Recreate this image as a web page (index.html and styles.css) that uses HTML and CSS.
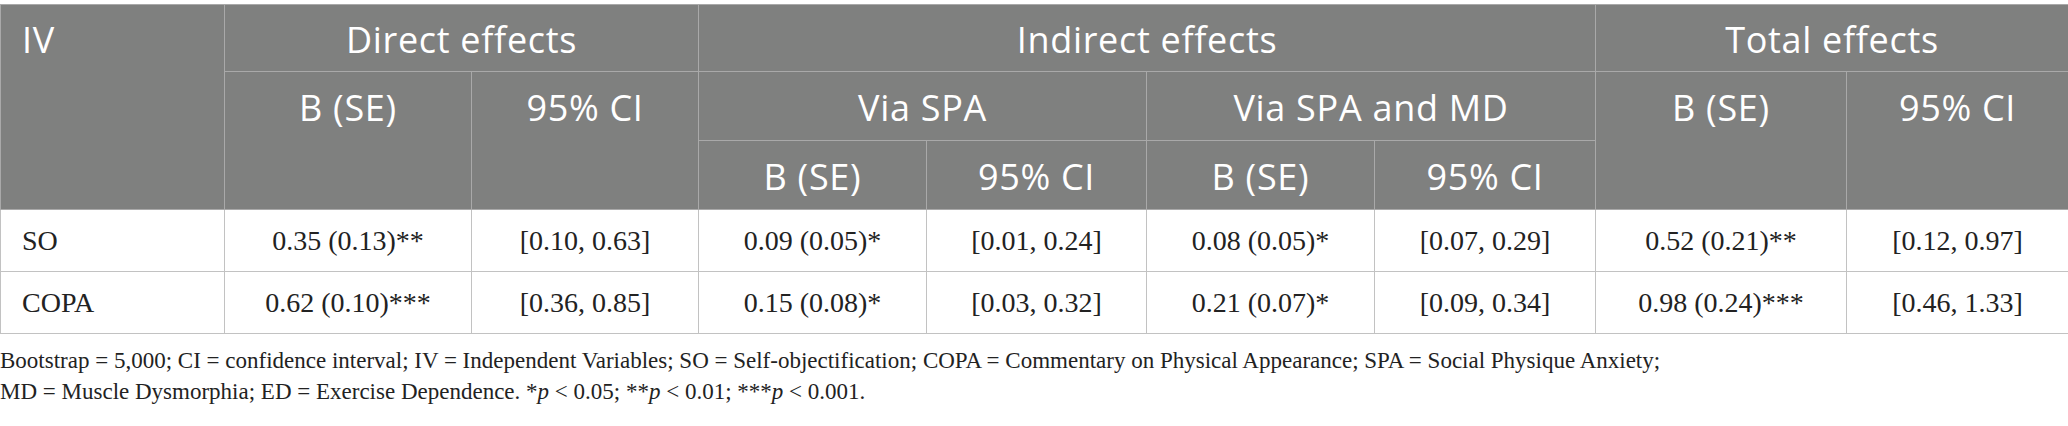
FILE: index.html
```html
<!DOCTYPE html>
<html lang="en">
<head>
<meta charset="utf-8">
<title>Effects table</title>
<link rel="stylesheet" href="styles.css">
</head>
<body>
<div class="wrap">
<table class="effects">
  <colgroup>
    <col class="c-iv">
    <col class="c1"><col class="c2">
    <col class="c3"><col class="c4">
    <col class="c5"><col class="c6">
    <col class="c7"><col class="c8">
  </colgroup>
  <thead>
    <tr class="r1">
      <th rowspan="3" class="left">IV</th>
      <th colspan="2">Direct effects</th>
      <th colspan="4">Indirect effects</th>
      <th colspan="2">Total effects</th>
    </tr>
    <tr>
      <th rowspan="2">B (SE)</th>
      <th rowspan="2">95% CI</th>
      <th colspan="2">Via SPA</th>
      <th colspan="2">Via SPA and MD</th>
      <th rowspan="2">B (SE)</th>
      <th rowspan="2">95% CI</th>
    </tr>
    <tr>
      <th>B (SE)</th>
      <th>95% CI</th>
      <th>B (SE)</th>
      <th>95% CI</th>
    </tr>
  </thead>
  <tbody>
    <tr>
      <td class="left">SO</td>
      <td>0.35 (0.13)**</td>
      <td>[0.10, 0.63]</td>
      <td>0.09 (0.05)*</td>
      <td>[0.01, 0.24]</td>
      <td>0.08 (0.05)*</td>
      <td>[0.07, 0.29]</td>
      <td>0.52 (0.21)**</td>
      <td>[0.12, 0.97]</td>
    </tr>
    <tr>
      <td class="left">COPA</td>
      <td>0.62 (0.10)***</td>
      <td>[0.36, 0.85]</td>
      <td>0.15 (0.08)*</td>
      <td>[0.03, 0.32]</td>
      <td>0.21 (0.07)*</td>
      <td>[0.09, 0.34]</td>
      <td>0.98 (0.24)***</td>
      <td>[0.46, 1.33]</td>
    </tr>
  </tbody>
</table>
<p class="note">Bootstrap = 5,000; CI = confidence interval; IV = Independent Variables; SO = Self-objectification; COPA = Commentary on Physical Appearance; SPA = Social Physique Anxiety;<br>MD = Muscle Dysmorphia; ED = Exercise Dependence. *<i>p</i> &lt; 0.05; **<i>p</i> &lt; 0.01; ***<i>p</i> &lt; 0.001.</p>
</div>
</body>
</html>
```

FILE: styles.css
```css
html, body {
  margin: 0;
  padding: 0;
  background: #ffffff;
}

.wrap {
  padding-top: 4px;
}

.effects {
  width: 2068px;
  border-collapse: collapse;
  table-layout: fixed;
  border: 1px solid #b4b4b4;
}

.c-iv { width: 224px; }
.c1 { width: 247px; }
.c2 { width: 227px; }
.c3 { width: 228px; }
.c4 { width: 220px; }
.c5 { width: 228px; }
.c6 { width: 221px; }
.c7 { width: 251px; }
.c8 { width: 222px; }

.effects th {
  background: #7f807f;
  color: #ffffff;
  font-family: "Open Sans", "Noto Sans", sans-serif;
  font-weight: 400;
  font-size: 36px;
  letter-spacing: 0.7px;
  line-height: 64px;
  padding: 4px 0 0 0;
  vertical-align: top;
  text-align: center;
  border: 1px solid #a9a9a9;
  white-space: nowrap;
}

.effects .r1 th {
  line-height: 63px;
  padding-top: 3px;
}

.effects td {
  font-family: "Liberation Serif", "Times New Roman", serif;
  font-size: 28px;
  color: #222222;
  height: 61px;
  padding: 0;
  text-align: center;
  vertical-align: middle;
  border: 1px solid #c2c2c2;
  white-space: nowrap;
}

.effects .left {
  text-align: left;
  padding-left: 21px;
}

.note {
  margin: 11px 0 0 0;
  font-family: "Liberation Serif", "Times New Roman", serif;
  font-size: 23px;
  line-height: 31px;
  color: #222222;
}
```
